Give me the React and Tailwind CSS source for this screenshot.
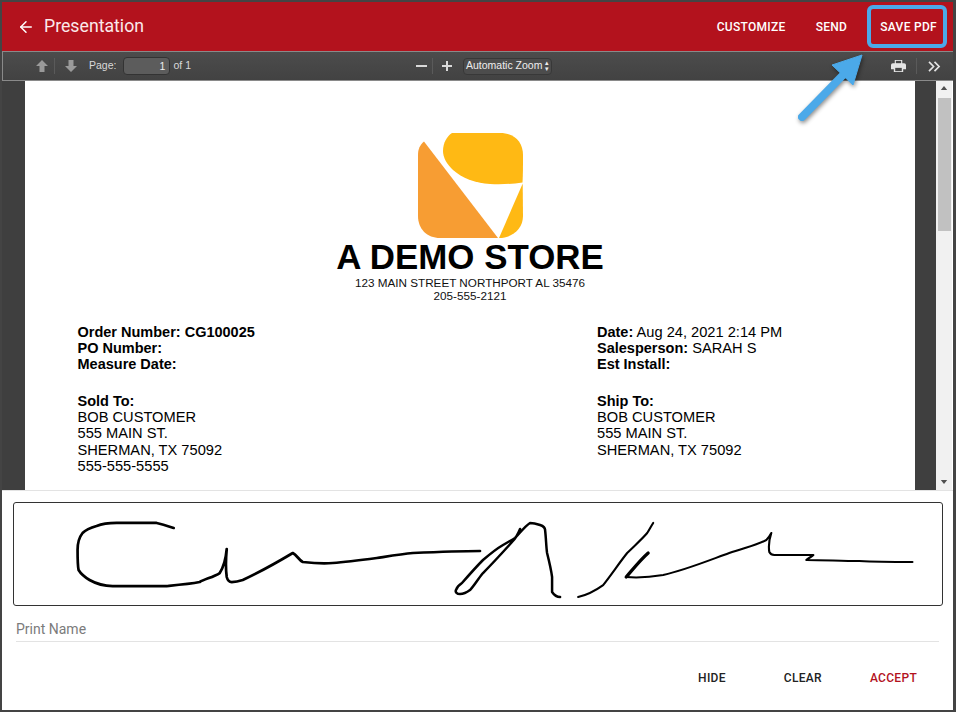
import React from "react";
import { ArrowLeft } from "lucide-react";

function Signature() {
  const strokes = [
    { d: "M174 528 C168 526 162 524 157 523 C145 523 130 523 117 523 C108 523 102 524 97 526 C90 528 86 530 83 533 C79 538 78 544 78 550 C78 558 78 565 79 570 C82 575 85 577 90 580 C97 584 105 586 113 586 C130 586 150 586 167 586 C178 585 190 584 200 582 C205 579 214 577 220 573 C224 567 226 560 227 549 C226 560 226 570 227 577 C228 581 230 582 232 582 C236 582 240 581 243 580 C260 572 278 562 293 553 C297 555 299 560 303 562 C312 563 322 564 333 563 C347 562 362 560 377 558 C390 556 402 554 413 553 C435 552 458 551 480 551", w: 2.7 },
    { d: "M520 529 C518 534 516 538 512 542 C503 552 493 563 483 573 C478 579 474 586 470 590 C466 593 463 594 460 594 C457 594 455 592 456 590 C457 587 459 585 462 583 C469 575 476 567 483 560 C490 554 496 549 503 545 C508 542 512 540 515 538 C520 533 525 526 530 523 C534 523 537 524 540 525 C543 526 545 528 545 530 C546 538 546 546 547 553 C549 561 551 569 552 577 C552 583 552 588 552 592 C554 595 557 597 560 597", w: 2.5 },
    { d: "M578 597 C586 595 596 590 603 585 C611 575 619 563 627 553 C634 546 641 540 647 533 C649 530 651 526 653 523", w: 2.1 },
    { d: "M648 553 C640 560 633 569 626 577", w: 3.2 },
    { d: "M626 577 C638 578 651 577 663 575 C685 570 707 561 729 553 C743 548 757 545 766 540 C768 538 770 535 771 533 C769 539 768 546 769 552 C770 554 772 555 774 555 C787 555 800 555 813 555 C811 557 808 558 806 560 C824 560 841 561 859 561 C877 562 895 562 912 562", w: 2.1 },
  ];
  return (
    <svg viewBox="14.5 503.5 927 101" className="w-full h-full block">
      {strokes.map((s, i) => (
        <path key={i} d={s.d} fill="none" stroke="#000" strokeWidth={s.w} strokeLinecap="round" strokeLinejoin="round" />
      ))}
    </svg>
  );
}

function Logo() {
  return (
    <svg viewBox="418 133 105 105" className="w-[105px] h-[105px] block">
      <path d="M424 141.5 C420 145 418 149 418 155 L418 216 C418 229 427 238 440 238 L498 238 Z" fill="#F79D33" />
      <path d="M452 133 C447 136 443 143 443 151 C443 158 447 164 453 170 C462 178 475 183 490 184 C502 184.5 512 184 522.5 182.5 C523 175 523 165 523 155 C523 142 514 133 500 133 Z" fill="#FFB914" />
      <path d="M522.7 183.5 L523 216 C523 229 512 238 499 238 Z" fill="#FFB914" />
    </svg>
  );
}

function PdfLine({ label, value }) {
  return (
    <div>
      <span className="font-bold text-[14.5px]">{label}</span>
      {value ? <span> {value}</span> : null}
    </div>
  );
}

function Fat({ down }) {
  return (
    <svg viewBox="0 0 14 14" className={down ? "w-[14px] h-[14px] rotate-180" : "w-[14px] h-[14px]"}>
      <path d="M7 1 L13 7 L9.5 7 L9.5 13 L4.5 13 L4.5 7 L1 7 Z" fill="#9a9a9a" />
    </svg>
  );
}

function Sep() {
  return <div className="w-px h-[16px] bg-[#333] border-r border-[#5a5a5a]" />;
}

export default function App() {
  return (
    <div className="relative w-[956px] h-[712px] overflow-hidden border-t-2 border-b-2 border-l-2 border-r-[3px] border-[#444] bg-white flex flex-col font-['Roboto',sans-serif]">
      <header className="h-[49px] shrink-0 bg-[#B3121D] flex items-center text-white">
        <ArrowLeft size={18} strokeWidth={2} className="ml-[15px]" />
        <span className="ml-[9px] text-[17.7px] text-[#fbe9ea]">Presentation</span>
        <div className="ml-auto flex items-center text-[12px] font-medium tracking-[0.3px] mr-[16px]">
          <span>CUSTOMIZE</span>
          <span className="ml-[30px]">SEND</span>
          <span className="ml-[33px]">SAVE PDF</span>
        </div>
      </header>

      <div className="h-[30px] shrink-0 border-t border-b border-l border-[#8a8a8a] border-r-0 bg-linear-to-b from-[#4c4c4c] to-[#424242] flex items-center text-[10.5px] text-[#d9d9d9] font-['Liberation_Sans',sans-serif]">
        <div className="ml-[32px]"><Fat /></div>
        <div className="ml-[5px]"><Sep /></div>
        <div className="ml-[9px]"><Fat down /></div>
        <span className="ml-[11px]">Page:</span>
        <div className="ml-[7px] w-[47px] h-[18px] rounded-sm border border-[#333] bg-[#5c5c5c] text-right pr-[4px] leading-[16px] text-[#eee]">1</div>
        <span className="ml-[3px]">of 1</span>
        <div className="ml-[225px] w-[11px] h-[2px] bg-[#d9d9d9]" />
        <div className="ml-[5px]"><Sep /></div>
        <div className="ml-[9px] relative w-[10px] h-[10px]">
          <div className="absolute left-0 top-[4px] w-[10px] h-[2px] bg-[#d9d9d9]" />
          <div className="absolute left-[4px] top-0 w-[2px] h-[10px] bg-[#d9d9d9]" />
        </div>
        <div className="ml-[11px] w-[89px] h-[17px] rounded-sm border border-[#383838] bg-[#4c4c4c] flex items-center justify-between pl-[2px] pr-[2px] text-[#eee] whitespace-nowrap">
          <span>Automatic Zoom</span>
          <span className="text-[7px] leading-[6px] flex flex-col">
            <span>▴</span>
            <span>▾</span>
          </span>
        </div>
        <svg viewBox="0 0 16 14" className="ml-[339px] w-[15px] h-[14px]">
          <path d="M4 0.5 H12 V4 H14 a2 2 0 0 1 2 2 V10.5 H13 V13.5 H3 V10.5 H0 V6 a2 2 0 0 1 2 -2 H4 Z" fill="#e4e4e4" />
          <path d="M4.5 9 H11.5 V12.5 H4.5 Z" fill="#474747" />
          <path d="M5.2 1.5 H10.8 V4 H5.2 Z" fill="#474747" />
        </svg>
        <div className="ml-[10px]"><Sep /></div>
        <svg viewBox="0 0 14 12" className="ml-[11px] w-[13px] h-[11px]">
          <path d="M1 1 L6 6 L1 11 M7 1 L12 6 L7 11" fill="none" stroke="#e4e4e4" strokeWidth="1.8" />
        </svg>
      </div>

      <div className="h-[409px] shrink-0 flex bg-[#3f3f3f] overflow-hidden">
        <div className="ml-[23px] w-[890px] h-[409px] bg-white text-black font-['Liberation_Sans',sans-serif] flex flex-col items-center overflow-hidden">
          <div className="mt-[52px]"><Logo /></div>
          <div className="text-[34.9px] leading-[38px] font-bold">A DEMO STORE</div>
          <div className="text-[11.7px] leading-[13px] text-[#111]">123 MAIN STREET NORTHPORT AL 35476</div>
          <div className="text-[11.7px] leading-[13px] text-[#111]">205-555-2121</div>
          <div className="w-full mt-[21.5px] pl-[52.5px] grid grid-cols-[519.5px_1fr] text-[14.65px] leading-[16.3px]">
            <div>
              <PdfLine label="Order Number: CG100025" />
              <PdfLine label="PO Number:" />
              <PdfLine label="Measure Date:" />
              <div className="h-[20.4px]" />
              <PdfLine label="Sold To:" />
              <div>BOB CUSTOMER</div>
              <div>555 MAIN ST.</div>
              <div>SHERMAN, TX 75092</div>
              <div>555-555-5555</div>
            </div>
            <div>
              <PdfLine label="Date:" value="Aug 24, 2021 2:14 PM" />
              <PdfLine label="Salesperson:" value="SARAH S" />
              <PdfLine label="Est Install:" />
              <div className="h-[20.4px]" />
              <PdfLine label="Ship To:" />
              <div>BOB CUSTOMER</div>
              <div>555 MAIN ST.</div>
              <div>SHERMAN, TX 75092</div>
            </div>
          </div>
        </div>
        <div className="ml-[21px] w-[16px] bg-[#f1f1f1] flex flex-col items-center text-[#505050]">
          <svg viewBox="0 0 8 5" className="mt-[5px] w-[8px] h-[4px]"><path d="M4 0 L8 5 H0 Z" fill="#505050" /></svg>
          <div className="mt-[8px] w-[13px] h-[133px] bg-[#c1c1c1]" />
          <svg viewBox="0 0 8 5" className="mt-auto mb-[6px] w-[8px] h-[4px]"><path d="M4 5 L8 0 H0 Z" fill="#505050" /></svg>
        </div>
        <div className="w-px bg-white" />
      </div>

      <div className="flex-1 border-t border-[#e3e3e3] bg-white flex flex-col">
        <div className="mt-[11px] ml-[11px] w-[930px] h-[104px] border-[1.5px] border-[#333] rounded-[3px] overflow-hidden">
          <Signature />
        </div>
        <div className="ml-[14px] w-[923px] mt-[13px] h-[23px] border-b border-[#e3e3e3] text-[14px] leading-[20px] text-[#7b7b7b]">Print Name</div>
        <div className="mt-[27px] flex justify-end text-[12px] font-medium tracking-[0.3px] text-[#222] pr-[36px]">
          <span>HIDE</span>
          <span className="ml-[58px]">CLEAR</span>
          <span className="ml-[48px] text-[#B3121D]">ACCEPT</span>
        </div>
      </div>

      <div className="absolute left-[865px] top-[3px] w-[80px] h-[43px] border-[4px] border-[#4BA9E9] rounded-[6px]" />
      <svg viewBox="0 0 956 712" className="absolute left-[-2px] top-[-2px] w-[956px] h-[712px] pointer-events-none">
        <g style={{ filter: "drop-shadow(1px 2px 2px rgba(0,0,0,0.45))" }}>
          <path d="M802 117 L845 73" stroke="#4BA9E9" strokeWidth="8" strokeLinecap="round" fill="none" />
          <path d="M832 65 L862 55 L853 85 Z" fill="#4BA9E9" stroke="#4BA9E9" strokeWidth="1" strokeLinejoin="round" />
        </g>
      </svg>
    </div>
  );
}
